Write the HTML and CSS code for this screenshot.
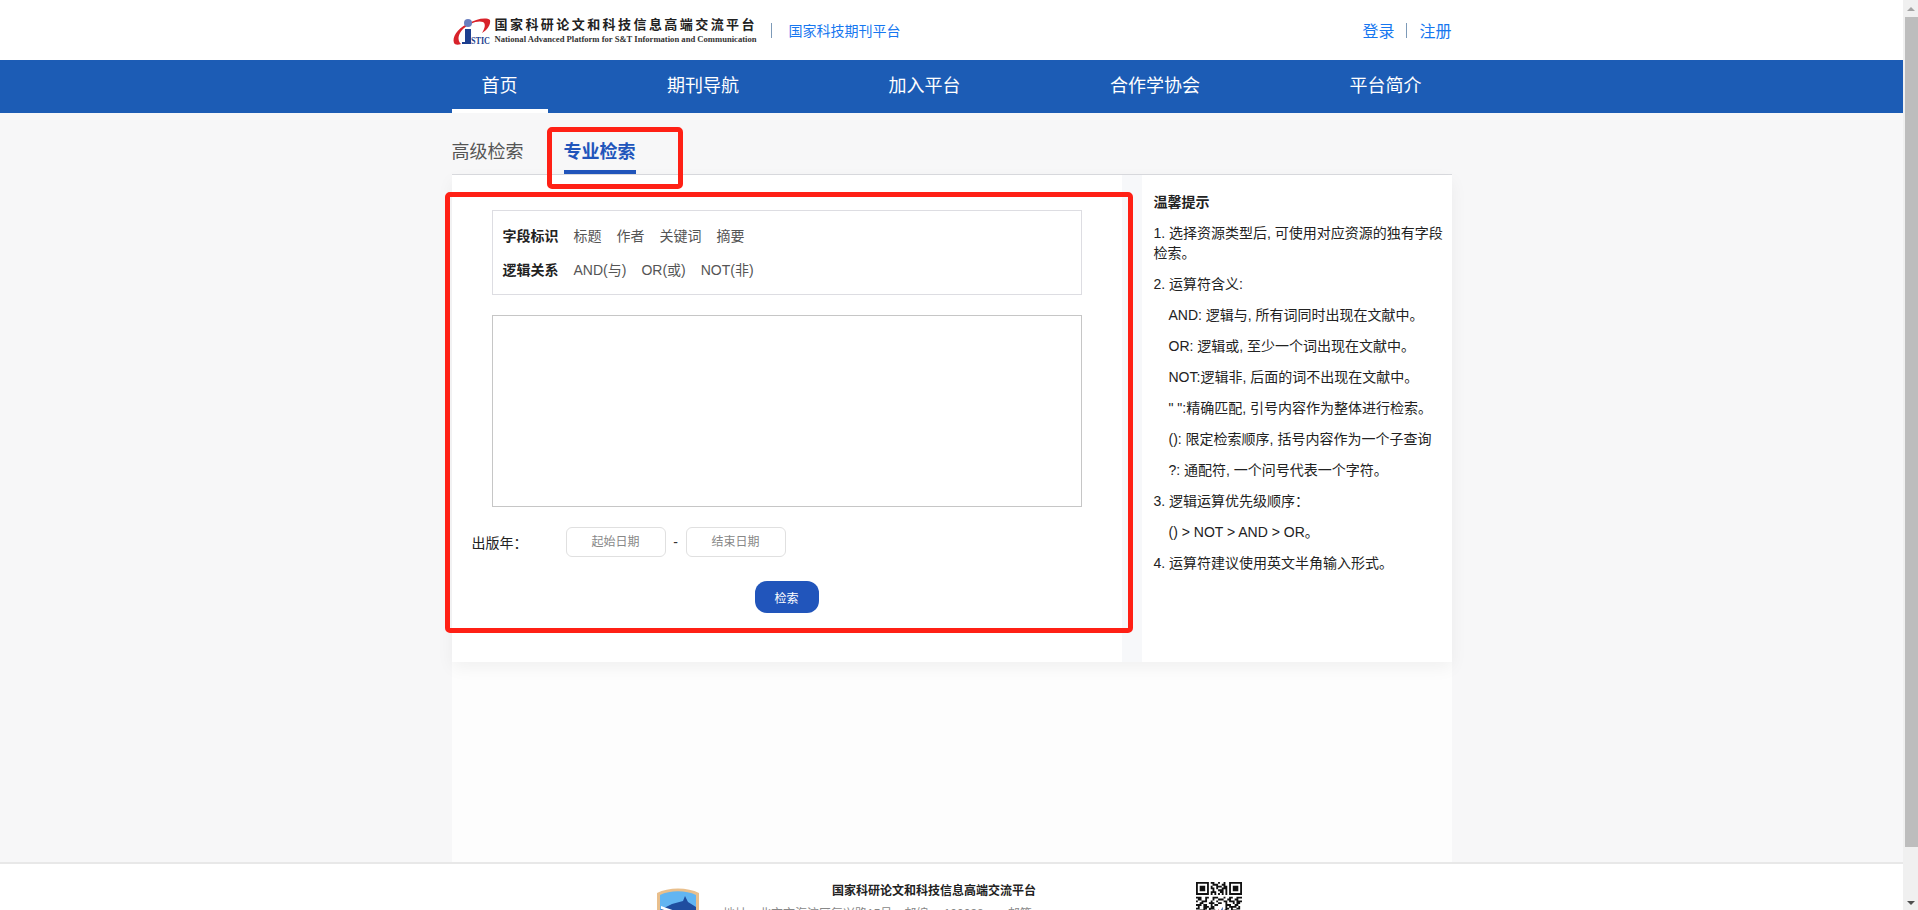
FILE: index.html
```html
<!DOCTYPE html>
<html lang="zh-CN">
<head>
    <meta charset="UTF-8">
    <meta name="viewport" content="width=device-width, initial-scale=1.0">
    <title>专业检索</title>
    <link rel="stylesheet" href="styles.css">
</head>
<body>
    <div class="page">
        <div class="main">
            <header class="top-bar">
                <div class="top-inner">
                    <a class="brand">
                        <svg class="brand-logo" width="38" height="28" viewBox="0 0 38 28">
                            <path d="M1 26C-1 20 4 12 14 7C23 2 33 0 37 3C38 8 34 13 29 16C32 11 33 7 30 5C24 3 16 7 10 12C5 17 4 23 8 27C5 28 2 28 1 26Z" fill="#d8222a"/>
                            <circle cx="15" cy="6" r="4" fill="#6a7fc0"/>
                            <path d="M12 12H18V27H9V25H12Z" fill="#1d3f8f"/>
                            <text x="18" y="27" class="brand-istic" textLength="19" lengthAdjust="spacingAndGlyphs">STIC</text>
                        </svg>
                        <span class="brand-text">
                            <span class="brand-cn">国家科研论文和科技信息高端交流平台</span>
                            <span class="brand-en">National Advanced Platform for S&amp;T Information and Communication</span>
                        </span>
                    </a>
                    <span class="brand-sep"></span>
                    <a class="brand-link">国家科技期刊平台</a>
                    <div class="user-links">
                        <a>登录</a>
                        <span class="user-sep"></span>
                        <a>注册</a>
                    </div>
                </div>
            </header>

            <nav class="main-nav">
                <div class="nav-inner">
                    <a class="nav-item active">首页</a>
                    <a class="nav-item">期刊导航</a>
                    <a class="nav-item">加入平台</a>
                    <a class="nav-item">合作学协会</a>
                    <a class="nav-item">平台简介</a>
                </div>
            </nav>

            <div class="content-wrap">
                <div class="content">
                    <div class="tabs">
                        <a class="tab">高级检索</a>
                        <a class="tab active">专业检索</a>
                    </div>
                    <div class="panels">
                        <section class="search-card">
                            <div class="field-box">
                                <div class="field-row">
                                    <b>字段标识</b>
                                    <span>标题</span>
                                    <span>作者</span>
                                    <span>关键词</span>
                                    <span>摘要</span>
                                </div>
                                <div class="field-row">
                                    <b>逻辑关系</b>
                                    <span>AND(与)</span>
                                    <span>OR(或)</span>
                                    <span>NOT(非)</span>
                                </div>
                            </div>
                            <textarea class="query-input"></textarea>
                            <div class="date-row">
                                <label class="date-label">出版年：</label>
                                <input class="date-input" type="text" placeholder="起始日期">
                                <span class="date-dash">-</span>
                                <input class="date-input" type="text" placeholder="结束日期">
                            </div>
                            <button class="search-btn" type="button">检索</button>
                        </section>
                        <aside class="tips">
                            <h4>温馨提示</h4>
                            <p>1. 选择资源类型后, 可使用对应资源的独有字段检索。</p>
                            <p>2. 运算符含义:</p>
                            <p class="sub">AND: 逻辑与, 所有词同时出现在文献中。</p>
                            <p class="sub">OR: 逻辑或, 至少一个词出现在文献中。</p>
                            <p class="sub">NOT:逻辑非, 后面的词不出现在文献中。</p>
                            <p class="sub">" ":精确匹配, 引号内容作为整体进行检索。</p>
                            <p class="sub">(): 限定检索顺序, 括号内容作为一个子查询</p>
                            <p class="sub">?: 通配符, 一个问号代表一个字符。</p>
                            <p>3. 逻辑运算优先级顺序：</p>
                            <p class="sub">() &gt; NOT &gt; AND &gt; OR。</p>
                            <p>4. 运算符建议使用英文半角输入形式。</p>
                        </aside>
                    </div>
                </div>
            </div>

            <footer class="footer">
                <svg class="footer-badge" width="44" height="60" viewBox="0 0 44 60">
                    <path d="M1 6C12 0 32 0 43 6V40C43 50 30 56 22 60C14 56 1 50 1 40Z" fill="#e9bf8c"/>
                    <path d="M4 8C14 3 30 3 40 8V40C40 48 29 53 22 57C15 53 4 48 4 40Z" fill="#62b5f2"/>
                    <path d="M4 23L16 17L27 14L29 9L32 15L40 20V40C40 48 29 53 22 57C15 53 4 48 4 40Z" fill="#1f4d9f"/>
                    <path d="M5 19L25 26L24 28L5 22Z" fill="#fff"/>
                </svg>
                <div class="footer-text">
                    <div class="footer-title">国家科研论文和科技信息高端交流平台</div>
                    <div class="footer-addr">地址：北京市海淀区复兴路15号　邮编： 100038　　邮箱：</div>
                </div>
                <svg class="footer-qr" width="46" height="46" viewBox="0 0 25 25">
                    <g fill="none" stroke="#111" stroke-width="1">
                        <path d="M8 .5h2m2 0h1m2 0h1M9 1.5h3m2 0h2M8 2.5h1m2 0h3m1 0h2M8 3.5h2m1 0h1m2 0h3M9 4.5h1m2 0h3m1 0h1M8 5.5h3m2 0h2m1 0h1M8 6.5h1m1 0h1m1 0h1m1 0h1m1 0h1"/>
                        <path d="M0 8.5h3m2 0h2m2 0h3m3 0h1m2 0h2m2 0h3M1 9.5h2m2 0h1m3 0h1m2 0h3m2 0h2m2 0h2M0 10.5h1m2 0h3m2 0h1m2 0h1m3 0h2m1 0h3m1 0h3M2 11.5h2m3 0h3m2 0h2m2 0h1m3 0h1m1 0h2M0 12.5h3m1 0h2m2 0h1m1 0h2m4 0h3m2 0h2M1 13.5h1m2 0h3m1 0h2m6 0h1m1 0h4m1 0h1M0 14.5h2m2 0h2m1 0h3m6 0h2m1 0h1m2 0h2M2 15.5h3m2 0h1m2 0h2m3 0h2m2 0h3"/>
                    </g>
                    <path d="M0 0h7v7H0ZM1 1v5h5V1ZM2 2h3v3H2ZM18 0h7v7h-7ZM19 1v5h5V1ZM20 2h3v3h-3ZM0 18h7v7H0ZM1 19v5h5v-5ZM2 20h3v3H2Z" fill="#111" fill-rule="evenodd"/>
                    <rect x="10.5" y="13" width="5" height="4" fill="#fff"/>
                    <path d="M11.500 16.500l1-2v2Z" fill="#d8222a"/>
                    <path d="M13 16.500l1.500-3v3Z" fill="#1f4d9f"/>
                </svg>
            </footer>
        </div>

        <div class="scrollbar">
            <span class="scroll-arrow up"></span>
            <span class="scroll-thumb"></span>
            <span class="scroll-arrow down"></span>
        </div>

        <!-- 截图上的红色标注框 -->
        <div class="mark mark-tab"></div>
        <div class="mark mark-form"></div>
    </div>
</body>
</html>
```

FILE: styles.css
```css
:root {
    --nav-blue: #1c5cb5;
    --accent: #2155bb;
    --link: #1677f0;
    --text: #333;
    --mark-red: #ff2015;
}

* {
    box-sizing: border-box;
}

html, body {
    margin: 0;
    height: 100%;
    overflow: hidden;
}

body {
    font-family: "Liberation Sans", "Noto Sans CJK SC", sans-serif;
    font-size: 14px;
    color: var(--text);
    background: #f7f7f8;
}

a {
    cursor: pointer;
}

.page {
    position: relative;
    display: flex;
    height: 910px;
    overflow: hidden;
}

.main {
    flex: 1;
    min-width: 0;
    display: flex;
    flex-direction: column;
}

/* 顶部 */
.top-bar {
    height: 60px;
    background: #fff;
    flex-shrink: 0;
}

.top-inner {
    width: 1000px;
    height: 100%;
    margin: 0 auto;
    display: flex;
    align-items: center;
}

.brand {
    display: flex;
    align-items: center;
    height: 100%;
    padding-left: 1px;
}

.brand-logo {
    margin-right: 4px;
    margin-top: 1px;
    overflow: visible;
}

.brand-istic {
    font-family: "Liberation Serif", serif;
    font-size: 10px;
    font-weight: 700;
    fill: #1d3f8f;
}

.brand-text {
    display: flex;
    flex-direction: column;
    width: 264px;
}

.brand-cn {
    font-size: 13px;
    font-weight: 700;
    line-height: 19px;
    letter-spacing: 2.44px;
    color: #222;
    white-space: nowrap;
}

.brand-en {
    font-family: "Liberation Serif", serif;
    font-size: 8.6px;
    font-weight: 700;
    line-height: 11px;
    color: #333;
    white-space: nowrap;
}

.brand-sep {
    width: 1px;
    height: 15px;
    margin: 0 17px 0 12px;
    background: #7d9ab8;
}

.brand-link {
    font-size: 14px;
    color: var(--link);
}

.user-links {
    margin-left: auto;
    display: flex;
    align-items: center;
    font-size: 16px;
    color: var(--link);
}

.user-sep {
    width: 1px;
    height: 15px;
    margin: 0 12px;
    background: #7d9ab8;
}

/* 导航 */
.main-nav {
    height: 53px;
    background: var(--nav-blue);
    flex-shrink: 0;
}

.nav-inner {
    width: 1000px;
    height: 100%;
    margin: 0 auto;
    display: flex;
    justify-content: space-between;
}

.nav-item {
    padding: 0 30px;
    font-size: 18px;
    line-height: 53px;
    color: #fff;
}

.nav-item.active {
    border-bottom: 4px solid #fff;
}

/* 内容 */
.content-wrap {
    flex: 1;
    min-height: 0;
}

.content {
    width: 1000px;
    height: 100%;
    margin: 0 auto;
    background: #fdfdfd;
}

.tabs {
    display: flex;
    gap: 40px;
    height: 62px;
    background: #f7f7f8;
    border-bottom: 1px solid #d9dade;
}

.tab {
    height: 61px;
    padding-top: 27px;
    font-size: 18px;
    line-height: 24px;
    color: #555;
}

.tab.active {
    font-weight: 700;
    color: var(--accent);
    border-bottom: 4px solid var(--accent);
}

.panels {
    display: flex;
    justify-content: space-between;
    background: #f7f8fa;
    box-shadow: 0 6px 16px rgba(0, 0, 0, 0.05);
}

.search-card {
    width: 670px;
    padding: 35px 40px 49px;
    background: #fff;
    display: flex;
    flex-direction: column;
}

.field-box {
    height: 85px;
    padding: 15px 10px;
    border: 1px solid #dddde2;
    display: flex;
    flex-direction: column;
    gap: 14px;
}

.field-row {
    display: flex;
    gap: 15px;
    line-height: 20px;
    font-size: 14px;
    color: #555;
}

.field-row b {
    color: #222;
}

.query-input {
    height: 192px;
    margin-top: 20px;
    border: 1px solid #c6c6c6;
    resize: none;
    outline: none;
}

.date-row {
    display: flex;
    align-items: center;
    margin: 20px 0 0 -20px;
}

.date-label {
    width: 94px;
    color: #222;
}

.date-input {
    width: 100px;
    height: 30px;
    border: 1px solid #e0e0e0;
    border-radius: 6px;
    outline: none;
    text-align: center;
    font-family: inherit;
    font-size: 12px;
}

.date-input::placeholder {
    color: #888;
    opacity: 1;
}

.date-dash {
    width: 20px;
    text-align: center;
    font-size: 14px;
}

.search-btn {
    align-self: center;
    width: 64px;
    height: 32px;
    margin-top: 24px;
    border: none;
    border-radius: 12px;
    background: var(--accent);
    color: #fff;
    font-family: inherit;
    font-size: 12px;
}

.tips {
    width: 310px;
    padding: 18px 8px 0 12px;
    background: #fff;
    color: #222;
    line-height: 20px;
}

.tips h4 {
    margin: 0;
    font-size: 14px;
    font-weight: 700;
    line-height: 19px;
}

.tips p {
    margin: 11px 0 0;
}

.tips .sub {
    padding-left: 15px;
}

/* 页脚 */
.footer {
    height: 48px;
    flex-shrink: 0;
    display: flex;
    align-items: flex-start;
    background: #fff;
    border-top: 2px solid #e8e8e8;
    padding-left: 656px;
    overflow: hidden;
}

.footer-badge {
    flex-shrink: 0;
    margin-top: 23px;
}

.footer-text {
    width: 422px;
    margin-left: 23px;
    padding-top: 17px;
    white-space: nowrap;
}

.footer-title {
    font-size: 12px;
    font-weight: 700;
    line-height: 20px;
    text-align: center;
    color: #222;
}

.footer-addr {
    margin-top: 4px;
    font-size: 12px;
    line-height: 18px;
    color: #888;
}

.footer-qr {
    flex-shrink: 0;
    margin-top: 18px;
    margin-left: 51px;
}

/* 滚动条 */
.scrollbar {
    width: 15px;
    flex-shrink: 0;
    display: flex;
    flex-direction: column;
    align-items: flex-end;
    background: #f0f0f0;
}

.scroll-arrow {
    width: 13px;
    height: 17px;
    position: relative;
    flex-shrink: 0;
}

.scroll-arrow::after {
    content: '';
    position: absolute;
    left: 2px;
    border-left: 4px solid transparent;
    border-right: 4px solid transparent;
}

.scroll-arrow.up::after {
    top: 7px;
    border-bottom: 4px solid #a3a3a3;
}

.scroll-arrow.down {
    margin-top: auto;
}

.scroll-arrow.down::after {
    bottom: 5px;
    border-top: 4px solid #505050;
}

.scroll-thumb {
    width: 13px;
    height: 830px;
    background: #bdbdbd;
}

/* 标注 */
.mark {
    position: absolute;
    border: 5px solid var(--mark-red);
    border-radius: 5px;
    pointer-events: none;
}

.mark-tab {
    left: 547px;
    top: 127px;
    width: 136px;
    height: 62px;
}

.mark-form {
    left: 445px;
    top: 192px;
    width: 688px;
    height: 441px;
}
```
